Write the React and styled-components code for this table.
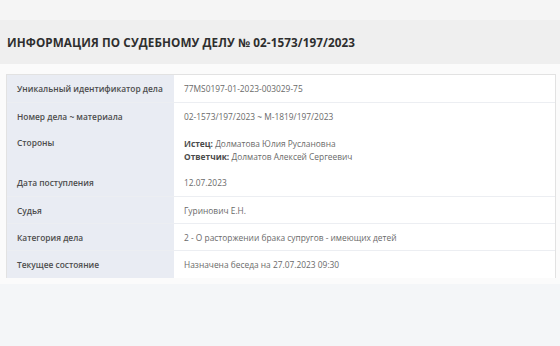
import styled, { createGlobalStyle } from "styled-components";

const GlobalStyle = createGlobalStyle`
  html, body {
    margin: 0;
    padding: 0;
    background: #f4f6f8;
  }
  body {
    font-family: "Open Sans", "Liberation Sans", sans-serif;
  }
`;

const rows = [
  { label: "Уникальный идентификатор дела", value: "77MS0197-01-2023-003029-75" },
  { label: "Номер дела ~ материала", value: "02-1573/197/2023 ~ М-1819/197/2023" },
  {
    label: "Стороны",
    parties: [
      { role: "Истец:", name: "Долматова Юлия Руслановна" },
      { role: "Ответчик:", name: "Долматов Алексей Сергеевич" },
    ],
  },
  { label: "Дата поступления", value: "12.07.2023" },
  { label: "Судья", value: "Гуринович Е.Н." },
  { label: "Категория дела", value: "2 - О расторжении брака супругов - имеющих детей" },
  { label: "Текущее состояние", value: "Назначена беседа на 27.07.2023 09:30" },
];

const App = () => {
  return (
    <Page>
      <GlobalStyle />
      <TopStrip />
      <Header>
        <Title>Информация по судебному делу № 02-1573/197/2023</Title>
      </Header>
      <Card>
        <Table>
          {rows.map((r) => (
            <Row key={r.label} tall={!!r.parties}>
              <Label>{r.label}</Label>
              <Value>
                {r.parties
                  ? r.parties.map((p) => (
                      <Line key={p.role}>
                        <b>{p.role}</b> {p.name}
                      </Line>
                    ))
                  : r.value}
              </Value>
            </Row>
          ))}
        </Table>
      </Card>
    </Page>
  );
};

export default App;

const Page = styled.div`
  width: 560px;
  height: 346px;
  background: #f4f6f8;
  display: flex;
  flex-direction: column;
`;

const TopStrip = styled.div`
  height: 20px;
  background: #f5f5f5;
`;

const Header = styled.div`
  height: 44px;
  background: #efefef;
  display: flex;
  align-items: center;
  padding-left: 7px;
`;

const Title = styled.h1`
  margin: 0;
  font-size: 11.7px;
  font-weight: 700;
  text-transform: uppercase;
  color: #2e2e2e;
  letter-spacing: 0.1px;
`;

const Card = styled.div`
  background: #fbfbfb;
  padding: 10px 4px 6px 6px;
`;

const Table = styled.div`
  border: 1px solid #e2e2e2;
  display: flex;
  flex-direction: column;
`;

const Row = styled.div`
  display: grid;
  grid-template-columns: 167px 1fr;
  height: ${({ tall }) => (tall ? "40px" : "27px")};
  & + & > * {
    border-top: 1px solid #eceef2;
  }
`;

const Label = styled.div`
  background: #e9ecf3;
  color: #4d4d4d;
  font-size: 8.4px;
  font-weight: 600;
  white-space: nowrap;
  padding: 8px 10px;
  box-sizing: border-box;
`;

const Value = styled.div`
  background: #ffffff;
  color: #6a6a6a;
  font-size: 8.4px;
  padding: 8px 10px;
  box-sizing: border-box;
  b {
    color: #4a4a4a;
    font-weight: 700;
  }
`;

const Line = styled.div`
  line-height: 13px;
`;
